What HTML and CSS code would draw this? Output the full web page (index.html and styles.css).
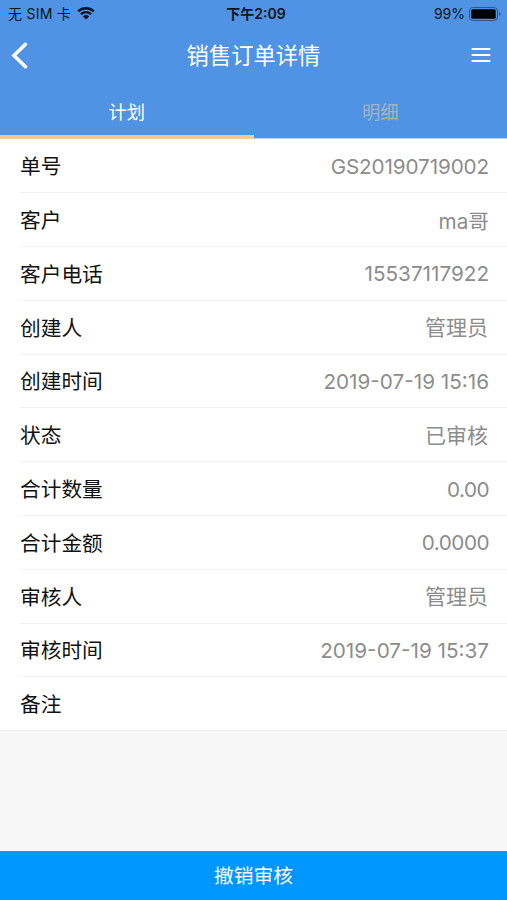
FILE: index.html
```html
<!DOCTYPE html>
<html lang="zh-CN">
<head>
	<meta charset="UTF-8">
	<title>销售订单详情</title>
	<link rel="stylesheet" href="styles.css">
</head>
<body>
	<div class="page">
		<div class="status">
			<div class="status-left">
				<span class="carrier">无 SIM 卡</span>
				<svg class="wifi" width="18" height="13" viewBox="0 0 18 13">
					<path d="M1.2 4.4a11.2 11.2 0 0 1 15.6 0M3.9 7.3a7.3 7.3 0 0 1 10.2 0" fill="none" stroke="#0a1420" stroke-width="2.3"/>
					<path d="M9 12.5L5.9 9.5a4.5 4.5 0 0 1 6.2 0z" fill="#0a1420"/>
				</svg>
			</div>
			<span class="clock">下午2:09</span>
			<div class="status-right">
				<span class="percent">99%</span>
				<svg class="battery" width="32" height="14" viewBox="0 0 32 14">
					<rect x=".5" y=".5" width="28" height="13" rx="3.5" fill="none" stroke="#305684"/>
					<rect x="2.3" y="2.3" width="24.4" height="9.4" rx="1.5" fill="#000"/>
					<path d="M30 5v4c1.8-.7 1.8-3.3 0-4z" fill="#305684"/>
				</svg>
			</div>
		</div>
		<div class="nav">
			<svg class="back" width="20" height="30" viewBox="0 0 20 30">
				<path d="M15.5 4.3L4 15.5L15.5 26.7" fill="none" stroke="#fff" stroke-width="3.6" stroke-linecap="round"/>
			</svg>
			<h1 class="title">销售订单详情</h1>
			<svg class="menu" width="20" height="16" viewBox="0 0 20 16">
				<path d="M1.5 2H18.5M1.5 8H18.5M1.5 14H18.5" fill="none" stroke="#fff" stroke-width="2.2" stroke-linecap="round"/>
			</svg>
		</div>
		<div class="tabs">
			<div class="tab current">计划</div>
			<div class="tab">明细</div>
		</div>
		<ul class="list">
			<li><span>单号</span><em class="num">GS20190719002</em></li>
			<li><span>客户</span><em>ma哥</em></li>
			<li><span>客户电话</span><em>15537117922</em></li>
			<li><span>创建人</span><em class="name">管理员</em></li>
			<li><span>创建时间</span><em>2019-07-19 15:16</em></li>
			<li><span>状态</span><em class="name">已审核</em></li>
			<li><span>合计数量</span><em class="sum">0.00</em></li>
			<li><span>合计金额</span><em class="sum">0.0000</em></li>
			<li><span>审核人</span><em class="name">管理员</em></li>
			<li><span>审核时间</span><em>2019-07-19 15:37</em></li>
			<li><span>备注</span><em></em></li>
		</ul>
		<div class="btn">撤销审核</div>
	</div>
</body>
</html>
```
FILE: styles.css
```css
*{
	margin: 0;
	padding: 0;
	box-sizing: border-box;
}
li{
	list-style: none;
}
em{
	font-style: normal;
}
svg{
	display: block;
}
body{
	font-family: Inter, "Noto Sans CJK SC", sans-serif;
	background-color: #f7f7f7;
}
.page{
	height: 900px;
	display: flex;
	flex-direction: column;
	overflow: hidden;
}
/* 状态栏 */
.status{
	height: 27px;
	padding: 0 6px 0 8px;
	display: grid;
	grid-template-columns: 1fr auto 1fr;
	align-items: center;
	background-color: #5092e3;
	color: #0a1420;
	font-size: 14px;
	line-height: 27px;
}
.status-left,
.status-right{
	display: flex;
	align-items: center;
}
.status-right{
	justify-content: flex-end;
}
.carrier{
	letter-spacing: .25px;
}
.wifi{
	margin-left: 6px;
}
.clock{
	font-weight: 600;
	padding-left: 3px;
}
.battery{
	margin-left: 4px;
}
/* 标题栏 */
.nav{
	height: 58px;
	padding: 0 16px 2px 10px;
	display: flex;
	align-items: center;
	justify-content: space-between;
	background-color: #5092e3;
	color: #fff;
}
.title{
	padding: 1px 0 0 6px;
	font-size: 22.3px;
	font-weight: 400;
	line-height: 53px;
}
.tabs{
	height: 54px;
	display: flex;
	background-color: #5092e3;
	border-bottom: 1px solid #b9d2f1;
}
.tab{
	width: 50%;
	height: 54px;
	line-height: 55px;
	text-align: center;
	font-size: 18.3px;
	color: #a3b3c6;
}
.tabs .current{
	color: #fff;
	border-bottom: 4px solid #f6ca88;
}
/* 订单信息 */
.list{
	background-color: #fff;
	border-bottom: 1px solid #ececec;
}
.list li{
	height: 53.8px;
	margin-left: 20px;
	padding-right: 18px;
	display: flex;
	align-items: center;
	justify-content: space-between;
	border-bottom: 1px solid #f3f3f3;
	font-size: 20.7px;
	color: #111;
}
.list li:first-child{
	height: 54.2px;
}
.list li:last-child{
	height: 52.6px;
	border-bottom: none;
}
.list span{
	padding-bottom: 1px;
}
.list em{
	padding-top: 1px;
	color: #8c8c8c;
}
.list .num{
	letter-spacing: -.12px;
}
.list .sum{
	letter-spacing: -.5px;
}
.list .name{
	font-size: 21px;
	padding: 0 1px 2px 0;
}
.btn{
	height: 49px;
	margin-top: auto;
	line-height: 51px;
	text-align: center;
	font-size: 19.8px;
	color: #fff;
	background-color: #0096ff;
}
```
